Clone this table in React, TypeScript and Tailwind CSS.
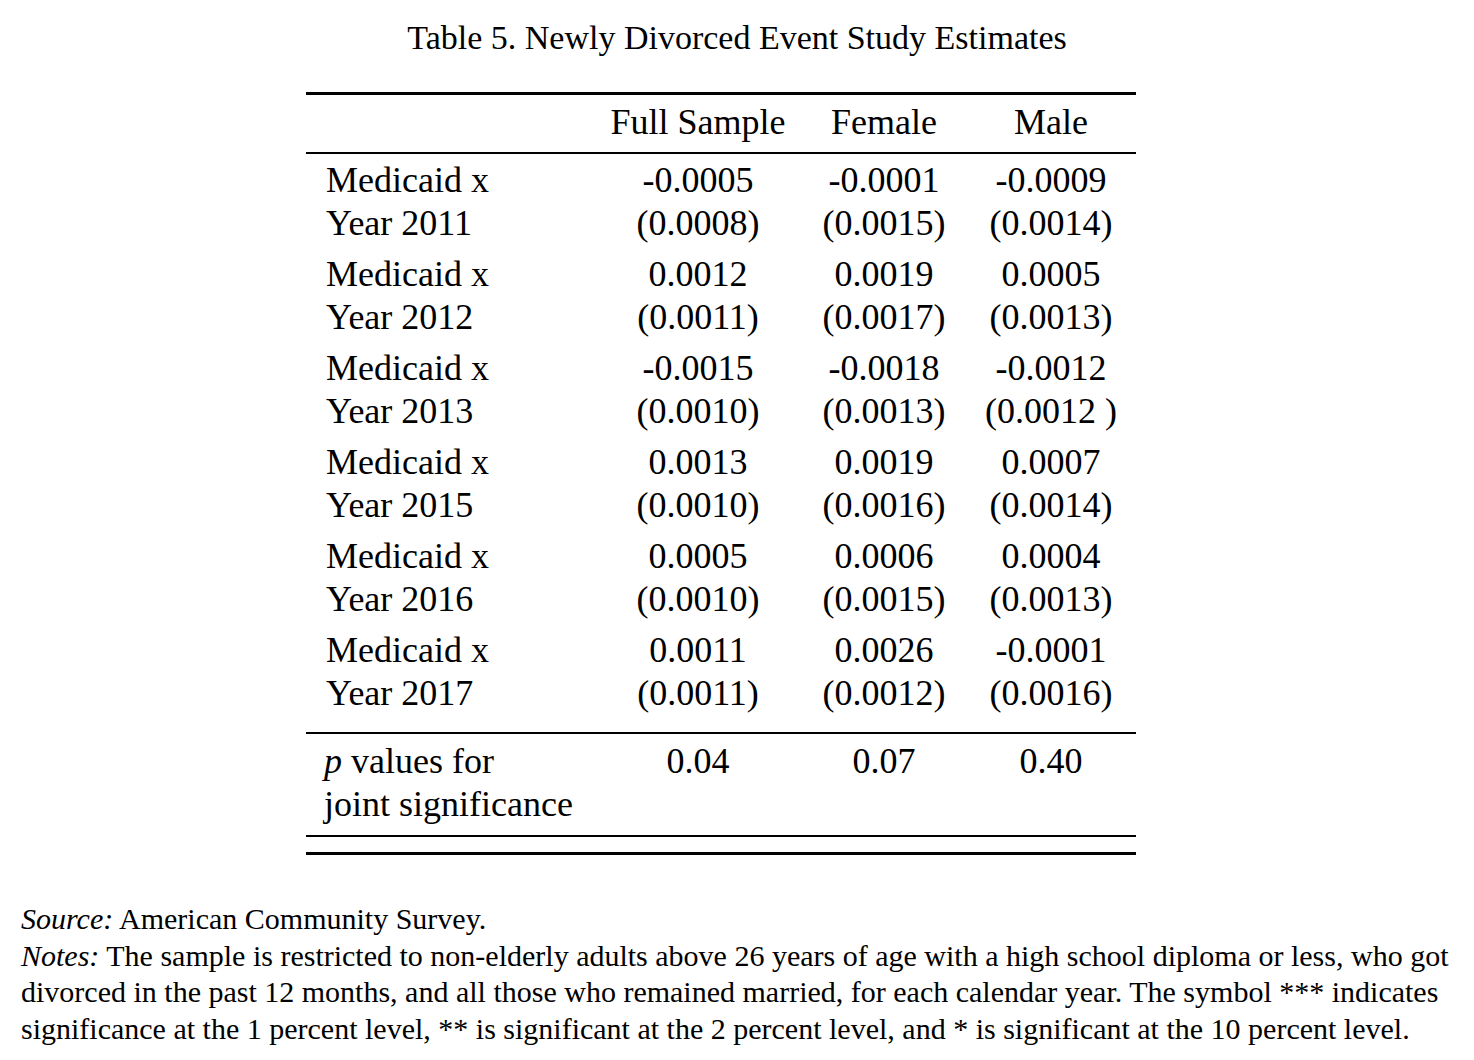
const rows = [
  { year: '2011', vals: ['-0.0005', '-0.0001', '-0.0009'], ses: ['(0.0008)', '(0.0015)', '(0.0014)'] },
  { year: '2012', vals: ['0.0012', '0.0019', '0.0005'], ses: ['(0.0011)', '(0.0017)', '(0.0013)'] },
  { year: '2013', vals: ['-0.0015', '-0.0018', '-0.0012'], ses: ['(0.0010)', '(0.0013)', '(0.0012 )'] },
  { year: '2015', vals: ['0.0013', '0.0019', '0.0007'], ses: ['(0.0010)', '(0.0016)', '(0.0014)'] },
  { year: '2016', vals: ['0.0005', '0.0006', '0.0004'], ses: ['(0.0010)', '(0.0015)', '(0.0013)'] },
  { year: '2017', vals: ['0.0011', '0.0026', '-0.0001'], ses: ['(0.0011)', '(0.0012)', '(0.0016)'] },
];

const grid = 'grid grid-cols-[300px_184px_188px_146px]';

export default function App() {
  return (
    <div className="w-[1474px] h-[1060px] bg-white text-black overflow-hidden font-['Liberation_Serif',serif]">
      <h1 className="pt-[18px] text-center text-[34px] leading-[40px] font-normal">
        Table 5. Newly Divorced Event Study Estimates
      </h1>

      <div className="ml-[306px] mt-[34px] w-[830px]">
        <div className="h-[3px] bg-black" />
        <div className={`${grid} pt-[6px] pb-[8px] text-[36px] leading-[43px]`}>
          <div />
          <div className="text-center">Full Sample</div>
          <div className="text-center">Female</div>
          <div className="text-center">Male</div>
        </div>
        <div className="h-[2px] bg-black" />

        <div className="pb-[14px] text-[36px] leading-[43px]">
          {rows.map((r) => (
            <div key={r.year} className={`${grid} pt-[5px] pb-[3px]`}>
              <div className="pl-[20px]">
                Medicaid x
                <br />
                Year {r.year}
              </div>
              {r.vals.map((v, i) => (
                <div key={i} className="text-center whitespace-pre">
                  {v}
                  <br />
                  {r.ses[i]}
                </div>
              ))}
            </div>
          ))}
        </div>
        <div className="h-[2px] bg-black" />

        <div className={`${grid} pt-[6px] pb-[9px] text-[36px] leading-[43px]`}>
          <div className="pl-[18px] whitespace-nowrap">
            <i>p</i> values for
            <br />
            joint significance
          </div>
          <div className="text-center">0.04</div>
          <div className="text-center">0.07</div>
          <div className="text-center">0.40</div>
        </div>
        <div className="h-[2px] bg-black" />
        <div className="h-[3px] mt-[15px] bg-black" />
      </div>

      <div className="mt-[46px] pl-[21px] text-[30px] leading-[36.5px] whitespace-nowrap">
        <p>
          <i>Source:</i> American Community Survey.
        </p>
        <p>
          <i>Notes:</i> The sample is restricted to non-elderly adults above 26 years of age with a high school diploma or less, who got
          <br />
          divorced in the past 12 months, and all those who remained married, for each calendar year. The symbol *** indicates
          <br />
          significance at the 1 percent level, ** is significant at the 2 percent level, and * is significant at the 10 percent level.
        </p>
      </div>
    </div>
  );
}
